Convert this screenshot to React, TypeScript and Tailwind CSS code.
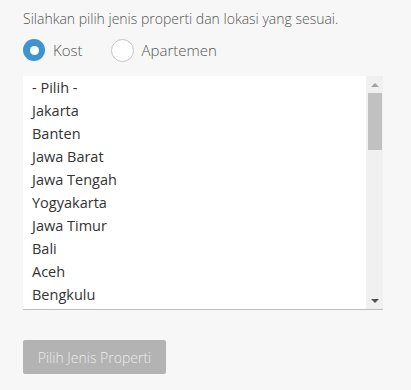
import React, { useState } from "react";

const provinces = [
  "- Pilih -",
  "Jakarta",
  "Banten",
  "Jawa Barat",
  "Jawa Tengah",
  "Yogyakarta",
  "Jawa Timur",
  "Bali",
  "Aceh",
  "Bengkulu",
];

const Radio = ({
  checked,
  label,
  onClick,
}: {
  checked: boolean;
  label: string;
  onClick: () => void;
}) => (
  <button type="button" onClick={onClick} className="flex items-center gap-[8px]">
    {checked ? (
      <span className="w-[22px] h-[22px] rounded-full bg-[#3f94cf] flex items-center justify-center">
        <span className="w-[9px] h-[9px] rounded-full bg-white" />
      </span>
    ) : (
      <span className="w-[23px] h-[23px] rounded-full bg-white border border-[#c4c4c4]" />
    )}
    <span className="text-[15px] font-light text-[#555]">{label}</span>
  </button>
);

export default function App() {
  const [type, setType] = useState<"kost" | "apartemen">("kost");

  return (
    <div
      className="w-[411px] h-[390px] bg-[#f7f7f7] px-[23px] pt-[8px]"
      style={{ fontFamily: '"Open Sans", sans-serif' }}
    >
      <p className="text-[14px] font-light text-[#555] leading-[22px]">
        Silahkan pilih jenis properti dan lokasi yang sesuai.
      </p>

      <div className="flex items-center gap-[28px] mt-[8px] h-[24px]">
        <Radio checked={type === "kost"} label="Kost" onClick={() => setType("kost")} />
        <Radio
          checked={type === "apartemen"}
          label="Apartemen"
          onClick={() => setType("apartemen")}
        />
      </div>

      <div className="mt-[14px] w-[360px] h-[234px] bg-white border-b border-[#bdbdbd] flex">
        <ul className="flex-1 overflow-hidden">
          {provinces.map((p) => (
            <li
              key={p}
              className="h-[23px] pl-[9px] flex items-center text-[14.5px] text-[#333]"
            >
              {p}
            </li>
          ))}
        </ul>
        <div className="w-[17px] bg-[#f0f0f0] flex flex-col items-center">
          <div className="h-[17px] flex items-center justify-center">
            <span className="w-0 h-0 border-l-[4px] border-r-[4px] border-b-[4px] border-l-transparent border-r-transparent border-b-[#a3a3a3]" />
          </div>
          <div className="w-[14px] h-[57px] bg-[#c1c1c1]" />
          <div className="flex-1" />
          <div className="h-[17px] flex items-center justify-center">
            <span className="w-0 h-0 border-l-[4px] border-r-[4px] border-t-[4px] border-l-transparent border-r-transparent border-t-[#505050]" />
          </div>
        </div>
      </div>

      <button
        type="button"
        disabled
        className="mt-[30px] w-[143px] h-[34px] rounded-[2px] bg-[#b3b3b3] text-[#ececec] text-[14px] font-light"
      >
        Pilih Jenis Properti
      </button>
    </div>
  );
}
